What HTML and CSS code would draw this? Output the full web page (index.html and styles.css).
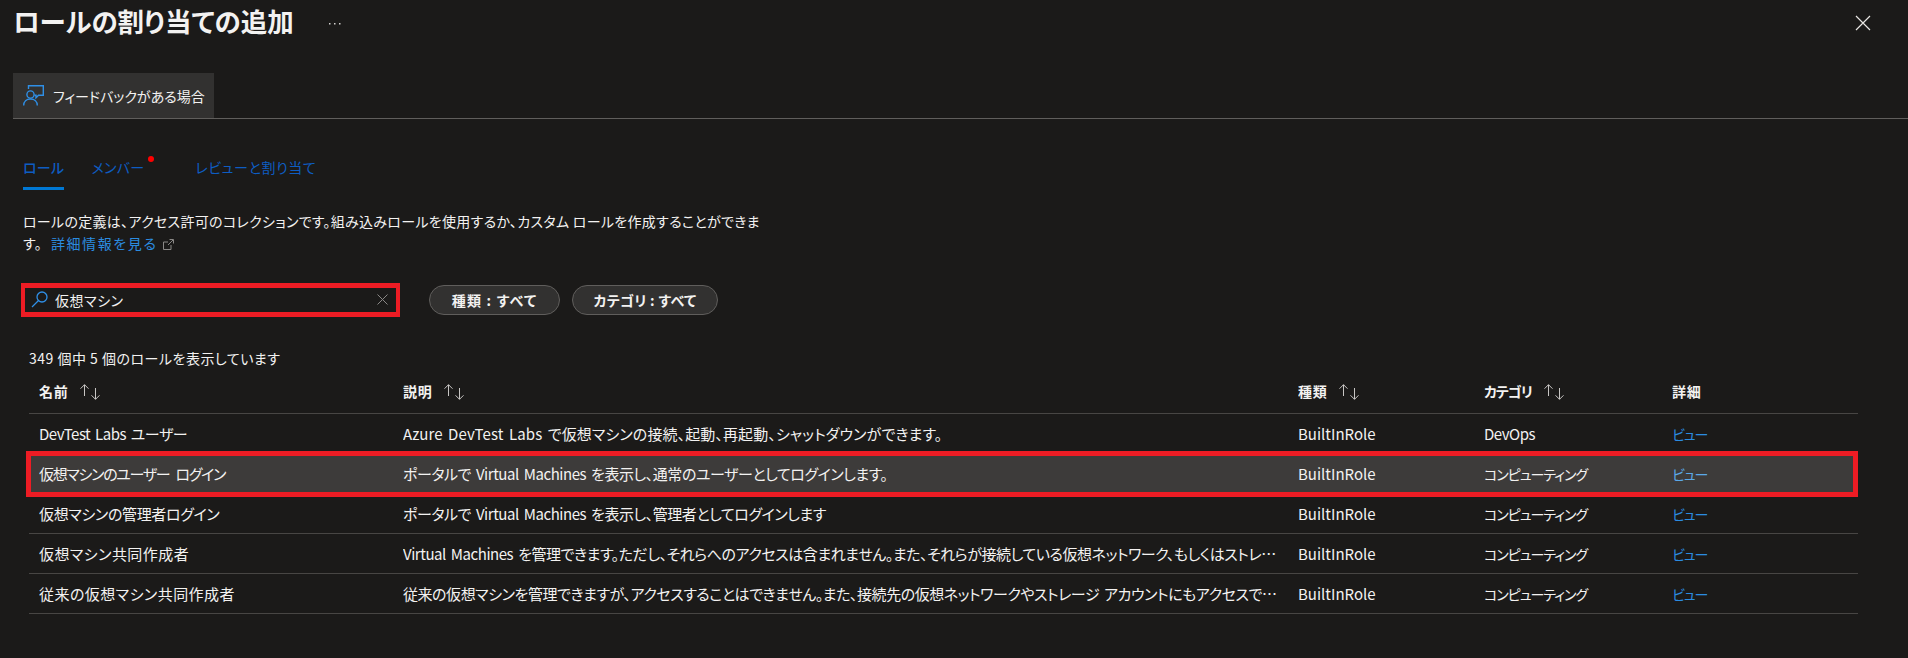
FILE: index.html
```html
<!DOCTYPE html>
<html lang="ja">

<head>
  <meta charset="UTF-8">
  <meta name="viewport" content="width=device-width, initial-scale=1.0">
  <title>ロールの割り当ての追加</title>
  <link rel="stylesheet" href="styles.css">
</head>

<body>
  <header class="title-bar">
    <h1 class="title">ロールの割り当ての追加</h1>
    <svg class="more" width="12" height="2" viewBox="0 0 12 2" fill="#d2d0ce">
      <rect x="0" y="0" width="1.500" height="1.500" />
      <rect x="5" y="0" width="1.500" height="1.500" />
      <rect x="10" y="0" width="1.500" height="1.500" />
    </svg>
    <svg class="close" width="16" height="16" viewBox="0 0 16 16">
      <path d="M1 1l14 14M15 1L1 15" stroke="#e8e6e3" stroke-width="1.200" fill="none" />
    </svg>
  </header>

  <div class="command-bar">
    <a href="javascript:;" class="feedback">
      <svg width="21" height="21" viewBox="0 0 21 21" fill="none" stroke="#2f8fe6" stroke-width="1.400">
        <path d="M5.500 4V.7h14.800v9.600h-4.800l-2.500 2.500v-2.500h-1.500" />
        <circle cx="7.500" cy="9.500" r="3.600" />
        <path d="M.7 20.500c0-4 2.800-6.500 6.800-6.500s6.800 2.500 6.800 6.500" />
      </svg>
      フィードバックがある場合
    </a>
  </div>

  <!-- タブ -->
  <nav class="tabs">
    <a href="javascript:;" class="tab active">ロール</a>
    <a href="javascript:;" class="tab dot">メンバー</a>
    <a href="javascript:;" class="tab">レビューと割り当て</a>
  </nav>

  <p class="intro">
    ロールの定義は、アクセス許可のコレクションです。組み込みロールを使用するか、カスタム ロールを作成することができま<br>す。<a href="javascript:;" class="link more-link">詳細情報を見る</a>
    <svg class="ext" width="11" height="11" viewBox="0 0 11 11" fill="none" stroke="#8a8886">
      <path d="M8 6v4.500H.5V3H5M5 6l5-5M6.500.5h4v4" />
    </svg>
  </p>

  <!-- 検索とフィルター -->
  <div class="filters">
    <div class="search">
      <svg width="17" height="17" viewBox="0 0 17 17" fill="none" stroke="#2f8fe6" stroke-width="1.300">
        <circle cx="11" cy="6" r="5" />
        <path d="M7.500 9.500L1 16" />
      </svg>
      <span class="search-text">仮想マシン</span>
      <svg width="11" height="11" viewBox="0 0 11 11" fill="none" stroke="#8a8886">
        <path d="M.5.5l10 10M10.500.5l-10 10" />
      </svg>
    </div>
    <button class="pill type-pill">種類 : すべて</button>
    <button class="pill cat-pill">カテゴリ : すべて</button>
  </div>

  <p class="count">349 個中 5 個のロールを表示しています</p>

  <div class="table">
    <div class="row head">
      <div class="cell">名前<svg class="sort" width="22" height="16" viewBox="0 0 22 16"><path d="M5.500 12V.7M1.500 4.700l4-4 4 4M16.500 4v11.300M12.500 11.300l4 4 4-4" /></svg></div>
      <div class="cell">説明<svg class="sort" width="22" height="16" viewBox="0 0 22 16"><path d="M5.500 12V.7M1.500 4.700l4-4 4 4M16.500 4v11.300M12.500 11.300l4 4 4-4" /></svg></div>
      <div class="cell">種類<svg class="sort" width="22" height="16" viewBox="0 0 22 16"><path d="M5.500 12V.7M1.500 4.700l4-4 4 4M16.500 4v11.300M12.500 11.300l4 4 4-4" /></svg></div>
      <div class="cell"><span class="kana">カテゴリ</span><svg class="sort" width="22" height="16" viewBox="0 0 22 16"><path d="M5.500 12V.7M1.500 4.700l4-4 4 4M16.500 4v11.300M12.500 11.300l4 4 4-4" /></svg></div>
      <div class="cell">詳細</div>
    </div>
    <div class="row">
      <div class="cell tight-a">DevTest Labs ユーザー</div>
      <div class="cell desc wide">Azure DevTest Labs で仮想マシンの接続、起動、再起動、シャットダウンができます。</div>
      <div class="cell">BuiltInRole</div>
      <div class="cell tight-a">DevOps</div>
      <div class="cell"><a href="javascript:;" class="link view">ビュー</a></div>
    </div>
    <div class="row selected">
      <div class="cell tight-b">仮想マシンのユーザー ログイン</div>
      <div class="cell desc">ポータルで Virtual Machines を表示し、通常のユーザーとしてログインします。</div>
      <div class="cell">BuiltInRole</div>
      <div class="cell kana">コンピューティング</div>
      <div class="cell"><a href="javascript:;" class="link view">ビュー</a></div>
    </div>
    <div class="row">
      <div class="cell tight-c">仮想マシンの管理者ログイン</div>
      <div class="cell desc">ポータルで Virtual Machines を表示し、管理者としてログインします</div>
      <div class="cell">BuiltInRole</div>
      <div class="cell kana">コンピューティング</div>
      <div class="cell"><a href="javascript:;" class="link view">ビュー</a></div>
    </div>
    <div class="row">
      <div class="cell loose">仮想マシン共同作成者</div>
      <div class="cell desc">Virtual Machines を管理できます。ただし、それらへのアクセスは含まれません。また、それらが接続している仮想ネットワーク、もしくはストレージ アカウントへのアクセスも管理できません。</div>
      <div class="cell">BuiltInRole</div>
      <div class="cell kana">コンピューティング</div>
      <div class="cell"><a href="javascript:;" class="link view">ビュー</a></div>
    </div>
    <div class="row">
      <div class="cell loose">従来の仮想マシン共同作成者</div>
      <div class="cell desc">従来の仮想マシンを管理できますが、アクセスすることはできません。また、接続先の仮想ネットワークやストレージ アカウントにもアクセスできません。</div>
      <div class="cell">BuiltInRole</div>
      <div class="cell kana">コンピューティング</div>
      <div class="cell"><a href="javascript:;" class="link view">ビュー</a></div>
    </div>
  </div>
</body>

</html>
```

FILE: styles.css
```css
* {
  margin: 0;
  padding: 0;
  box-sizing: border-box;
}

a {
  text-decoration: none;
}

body {
  background-color: #1b1a19;
  color: #f3f2f1;
  font-family: "Noto Sans CJK JP", "Noto Sans", sans-serif;
  font-size: 14px;
  font-feature-settings: "palt";
  height: 658px;
  overflow: hidden;
}

.title-bar {
  display: flex;
  align-items: center;
  height: 42px;
  padding: 0 37px 0 13px;
}

.title {
  font-size: 26.5px;
  font-weight: 700;
  line-height: 42px;
}

.more {
  margin: 6px 0 0 35px;
}

.close {
  margin: 4px 0 0 auto;
}

.command-bar {
  margin: 31px 0 0 13px;
  height: 46px;
  border-bottom: 1px solid #605e5c;
}

.feedback {
  display: inline-flex;
  align-items: center;
  gap: 9px;
  width: 201px;
  height: 45px;
  padding-left: 10px;
  background-color: #323130;
  color: #f3f2f1;
}

/* タブ */
.tabs {
  display: flex;
  margin: 34px 0 0 23px;
  height: 37px;
}

.tab {
  position: relative;
  height: 37px;
  line-height: 28px;
  color: #0e5dc2;
  letter-spacing: .3px;
  margin-right: 27px;
}

.tab:last-child {
  letter-spacing: .6px;
}

.tab.active {
  font-weight: 500;
  border-bottom: 3px solid #0078d4;
}

.tab.dot {
  margin-right: 51px;
}

.tab.dot::after {
  content: "";
  position: absolute;
  top: 3px;
  right: -10px;
  width: 6px;
  height: 6px;
  border-radius: 50%;
  background-color: #f00;
}

.intro {
  margin: 20px 0 0 23px;
  line-height: 22px;
  letter-spacing: .3px;
  color: #f3f2f1;
}

.link {
  color: #2b8ce0;
}

.more-link {
  margin-left: 9px;
  letter-spacing: 1.6px;
}

.ext {
  margin-left: 2px;
  vertical-align: -1px;
}

/* 検索とフィルター */
.filters {
  display: flex;
  align-items: center;
  margin: 29px 0 0 21px;
}

.search {
  display: flex;
  align-items: center;
  width: 379px;
  height: 34px;
  padding: 0 8px 1px 6px;
  border: 5px solid #ed1c24;
  border-width: 5px 4px;
}

.search-text {
  flex: 1;
  margin-left: 7px;
  letter-spacing: .5px;
}

.pill {
  height: 30px;
  border: 1px solid #605e5c;
  border-radius: 15px;
  background-color: #323130;
  color: #f3f2f1;
  font: inherit;
  font-feature-settings: inherit;
  font-weight: 700;
}

.type-pill {
  width: 131px;
  margin-left: 29px;
  letter-spacing: 1.2px;
}

.cat-pill {
  width: 146px;
  margin-left: 12px;
  letter-spacing: .3px;
}

.count {
  margin: 31px 0 0 29px;
  line-height: 20px;
  letter-spacing: .5px;
}

/* 一覧 */
.table {
  margin: 6px 50px 0 29px;
}

.row {
  position: relative;
  display: grid;
  grid-template-columns: 364px 895px 186px 188px 1fr;
  align-items: center;
  height: 40px;
  padding-left: 10px;
  font-size: 15px;
  border-bottom: 1px solid #484644;
}

.row.head {
  height: 40px;
  padding-bottom: 6px;
  font-size: 14px;
  font-weight: 700;
  letter-spacing: .7px;
}

.row.selected {
  background-color: #3d3b3a;
  border-bottom-color: transparent;
}

/* 赤枠 */
.row.selected::after {
  content: "";
  position: absolute;
  top: -3px;
  left: -3px;
  right: 0;
  bottom: -4px;
  border: 5px solid #ed1c24;
  pointer-events: none;
}

.row.selected .link {
  color: #5ba9e8;
}

.cell {
  display: block;
  overflow: hidden;
  white-space: nowrap;
  text-overflow: ellipsis;
  padding-right: 19px;
}

.desc {
  letter-spacing: -.45px;
  word-spacing: 2px;
}

.desc.wide {
  letter-spacing: .1px;
}

.tight-a {
  letter-spacing: -.5px;
  word-spacing: 2px;
}

.tight-b {
  letter-spacing: -1.3px;
  word-spacing: 4px;
}

.tight-c {
  letter-spacing: -.35px;
}

.loose {
  letter-spacing: .45px;
}

.kana {
  font-size: 14px;
  letter-spacing: -1px;
}

.view {
  font-size: 14px;
  letter-spacing: -1px;
}

.sort {
  margin-left: 11px;
  vertical-align: -3px;
  fill: none;
  stroke: #c8c6c4;
  stroke-width: 1;
}
```
